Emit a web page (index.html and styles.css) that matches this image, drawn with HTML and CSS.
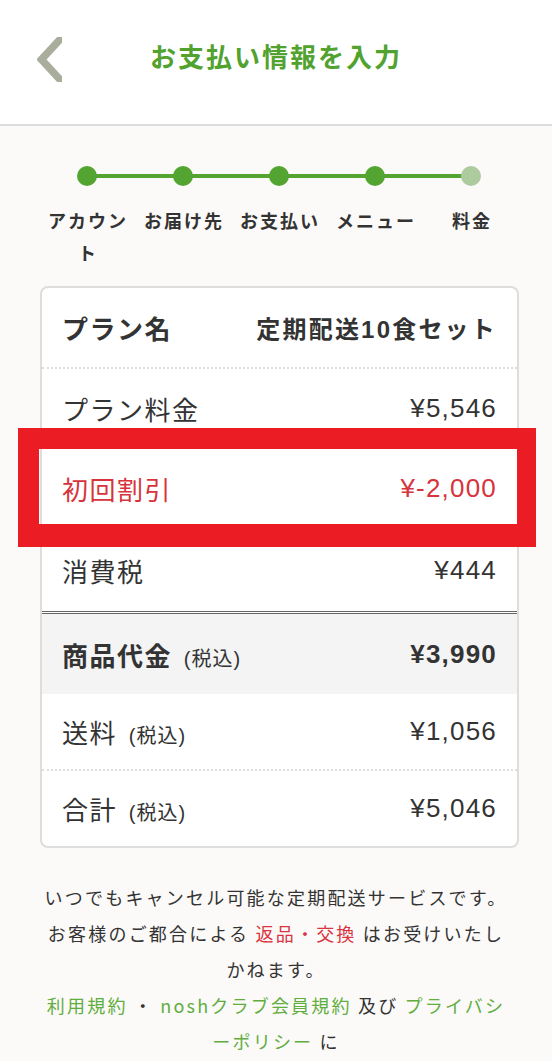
FILE: index.html
```html
<!DOCTYPE html>
<html lang="ja">
<head>
<meta charset="utf-8">
<title>お支払い情報を入力</title>
<link rel="stylesheet" href="styles.css">
</head>
<body>
<header class="header">
  <div class="header__back">
    <svg class="chevron" width="25" height="45" viewBox="0 0 25 45"><polyline points="28,-3 4.5,22.5 28,48" fill="none" stroke="#a9ad9c" stroke-width="7.5"/></svg>
  </div>
  <h1 class="header__title">お支払い情報を入力</h1>
  <div></div>
</header>

<main class="main">
  <ol class="steps">
    <li class="step step--done"><span class="step__dot"></span><span class="step__label">アカウント</span></li>
    <li class="step step--done"><span class="step__dot"></span><span class="step__label">お届け先</span></li>
    <li class="step step--done"><span class="step__dot"></span><span class="step__label">お支払い</span></li>
    <li class="step step--done"><span class="step__dot"></span><span class="step__label">メニュー</span></li>
    <li class="step step--current"><span class="step__dot"></span><span class="step__label">料金</span></li>
  </ol>

  <div class="card">
    <div class="row row--plan"><span class="row__label bold">プラン名</span><span class="row__plan bold">定期配送10食セット</span></div>
    <div class="row"><span class="row__label">プラン料金</span><span class="row__value">¥5,546</span></div>
    <div class="row row--discount"><span class="row__label">初回割引</span><span class="row__value">¥-2,000</span></div>
    <div class="row row--tax"><span class="row__label">消費税</span><span class="row__value">¥444</span></div>
    <div class="row row--subtotal"><span class="row__label bold">商品代金 <small class="note">(税込)</small></span><span class="row__value bold">¥3,990</span></div>
    <div class="row row--ship"><span class="row__label">送料 <small class="note">(税込)</small></span><span class="row__value">¥1,056</span></div>
    <div class="row row--total"><span class="row__label">合計 <small class="note">(税込)</small></span><span class="row__value">¥5,046</span></div>
  </div>

  <div class="notice">
    <p class="notice__p">いつでもキャンセル可能な定期配送サービスです。お客様のご都合による <a class="link link--red">返品・交換</a> はお受けいたしかねます。</p>
    <p class="notice__p"><a class="link link--green">利用規約</a> ・ <a class="link link--green">noshクラブ会員規約</a> 及び <a class="link link--green">プライバシーポリシー</a> に</p>
  </div>
</main>

<div class="highlight"></div>
</body>
</html>
```

FILE: styles.css
```css
* { box-sizing: border-box; }
html, body { margin: 0; padding: 0; }
body {
  background: #fbfaf8;
  font-family: "Liberation Sans", "Noto Sans CJK JP", sans-serif;
  color: #333;
  width: 552px;
  height: 1061px;
  overflow: hidden;
}

.header {
  height: 126px;
  padding-bottom: 8px;
  background: #fff;
  border-bottom: 2px solid #dcdcdc;
  display: grid;
  grid-template-columns: 1fr auto 1fr;
  align-items: center;
}
.header__back { padding-left: 37px; display: flex; align-items: center; padding-top: 2px; }
.chevron { display: block; }
.header__title {
  margin: 0 0 6px 0;
  font-size: 26px;
  font-weight: bold;
  letter-spacing: 2px;
  color: #52a22f;
  font-family: "Noto Sans CJK JP", sans-serif;
}

.main { padding: 40px 0 0 0; }

.steps {
  list-style: none;
  margin: 0 0 0 39px;
  padding: 0;
  width: 480px;
  display: grid;
  grid-template-columns: repeat(5, 96px);
}
.step {
  position: relative;
  display: flex;
  flex-direction: column;
  align-items: center;
}
.step:not(:last-child)::after {
  content: "";
  position: absolute;
  top: 8px;
  left: 50%;
  width: 100%;
  height: 4px;
  background: #53a431;
}
.step__dot {
  position: relative;
  z-index: 1;
  width: 20px;
  height: 20px;
  border-radius: 50%;
  background: #53a431;
}
.step--current .step__dot { background: #aecba0; }
.step__label {
  margin-top: 18px;
  font-family: "Noto Sans CJK JP", sans-serif;
  font-size: 18px;
  font-weight: bold;
  letter-spacing: 2px;
  line-height: 32px;
  text-align: center;
  color: #333;
  width: 96px;
  padding-left: 2px;
}

.card {
  margin: 18px 0 0 40px;
  width: 479px;
  background: #fff;
  border: 2px solid #dddddd;
  border-radius: 8px;
  overflow: hidden;
}
.row {
  height: 80px;
  padding: 0 20px 0 20px;
  display: flex;
  align-items: center;
  justify-content: space-between;
  border-bottom: 2px dotted #dddddd;
  font-size: 26px;
  letter-spacing: 1.5px;
}
.row--plan { height: 81px; }
.row--tax { height: 85px; border-bottom: 3px double #666; }
.row--subtotal { background: #f4f4f4; border-bottom: none; }
.row--ship { height: 77px; }
.row--total { height: 75px; border-bottom: none; }
.row--discount { color: #d7333d; }
.bold { font-weight: bold; }
.row__label { white-space: nowrap; }
.row__plan { font-size: 24px; letter-spacing: 2.2px; }
.row__value { letter-spacing: 1.2px; }
.note {
  font-size: 20px;
  font-weight: normal;
  letter-spacing: 1px;
  margin-left: 3px;
}

.notice {
  margin: 31px 0 0 0;
  padding: 0 40px;
  text-align: center;
  font-family: "Noto Sans CJK JP", sans-serif;
  font-size: 18px;
  letter-spacing: 2.2px;
  line-height: 36px;
  color: #333;
}
.notice__p { margin: 0; }
.link { text-decoration: none; }
.link--red { color: #d9343f; }
.link--green { color: #62ad3f; }

.highlight {
  position: absolute;
  top: 428px;
  left: 18px;
  width: 518px;
  height: 119px;
  border-style: solid;
  border-color: #ec1c24;
  border-width: 21px 19px 23px 21px;
  pointer-events: none;
}
```
